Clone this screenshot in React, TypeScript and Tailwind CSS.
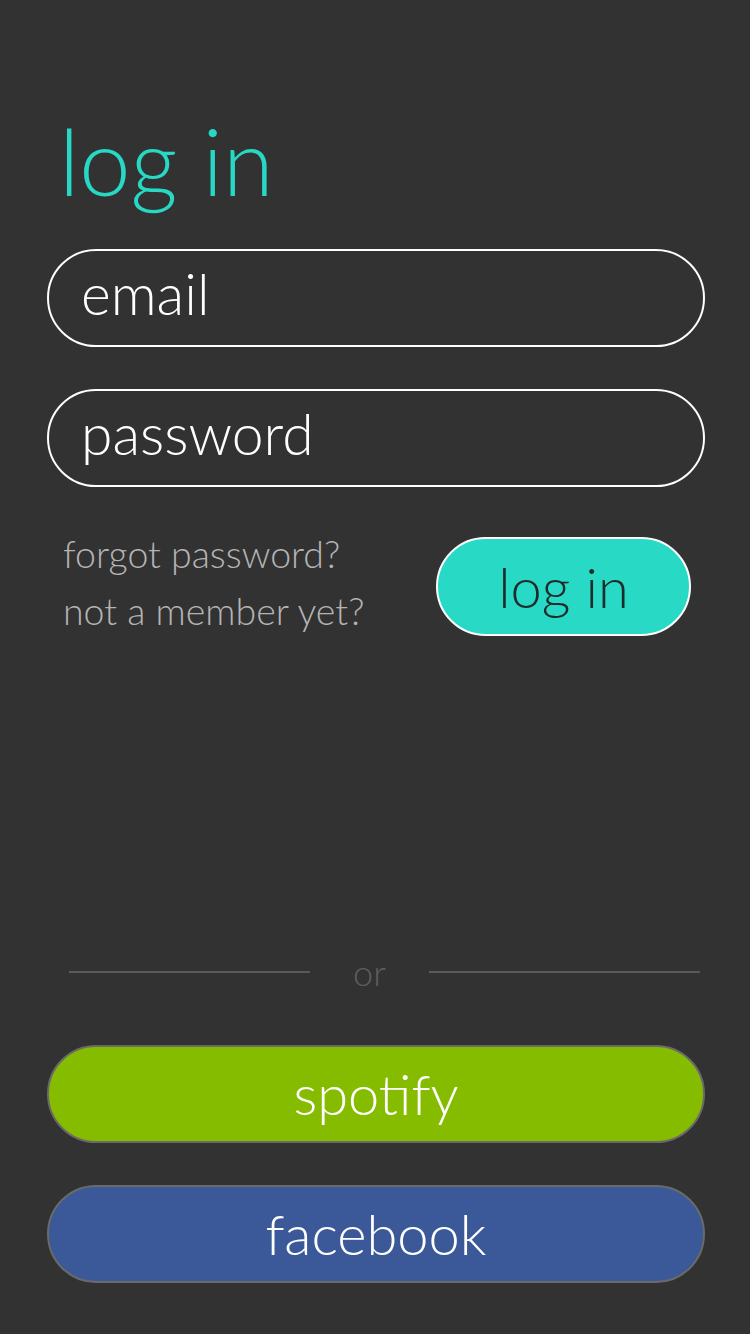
export default function App() {
  return (
    <div
      className="min-h-[1334px] w-[750px] bg-[#323232] flex flex-col pl-[47px] pr-[45px] pb-[51px]"
      style={{ fontFamily: "Lato, 'Open Sans', sans-serif" }}
    >
      {/* Header */}
      <h1 className="mt-[101px] ml-[12px] text-[92px] font-light leading-[120px] text-[#27d9c4]">
        log in
      </h1>

      {/* Inputs */}
      <div className="mt-[28px] flex flex-col gap-[42px]">
        <div className="h-[98px] rounded-full border-2 border-white flex items-center pl-[32px] pb-[10px]">
          <span className="text-[57px] font-light text-white leading-none">email</span>
        </div>
        <div className="h-[98px] rounded-full border-2 border-white flex items-center pl-[32px] pb-[10px]">
          <span className="text-[57px] font-light text-white leading-none">password</span>
        </div>
      </div>

      {/* Links + login */}
      <div className="mt-[50px] flex items-start justify-between pr-[14px]">
        <div className="flex flex-col gap-[23px] pl-[16px] text-[37.5px] font-light text-[#b4b4b4] leading-[34px]">
          <span>forgot password?</span>
          <span>not a member yet?</span>
        </div>
        <button className="w-[255px] h-[99px] rounded-full border-2 border-white bg-[#28d9c5] text-[56px] font-light text-[#1e2b2a] leading-none">
          log in
        </button>
      </div>

      <div className="flex-1" />

      {/* Divider */}
      <div className="flex items-center pl-[22px] pr-[5px] mb-[55px]">
        <div className="h-[2px] w-[241px] bg-[#5a5a5a]" />
        <span className="flex-1 text-center text-[36px] font-light text-[#5e5e5e] leading-none">
          or
        </span>
        <div className="h-[2px] w-[271px] bg-[#5a5a5a]" />
      </div>

      {/* Social */}
      <div className="flex flex-col gap-[42px]">
        <button className="h-[98px] rounded-full border-2 border-[#6a6a6a] bg-[#86bc00] text-[56px] font-light text-white leading-none">
          spotify
        </button>
        <button className="h-[98px] rounded-full border-2 border-[#6a6a6a] bg-[#3b5998] text-[56px] font-light text-white leading-none">
          facebook
        </button>
      </div>
    </div>
  );
}
